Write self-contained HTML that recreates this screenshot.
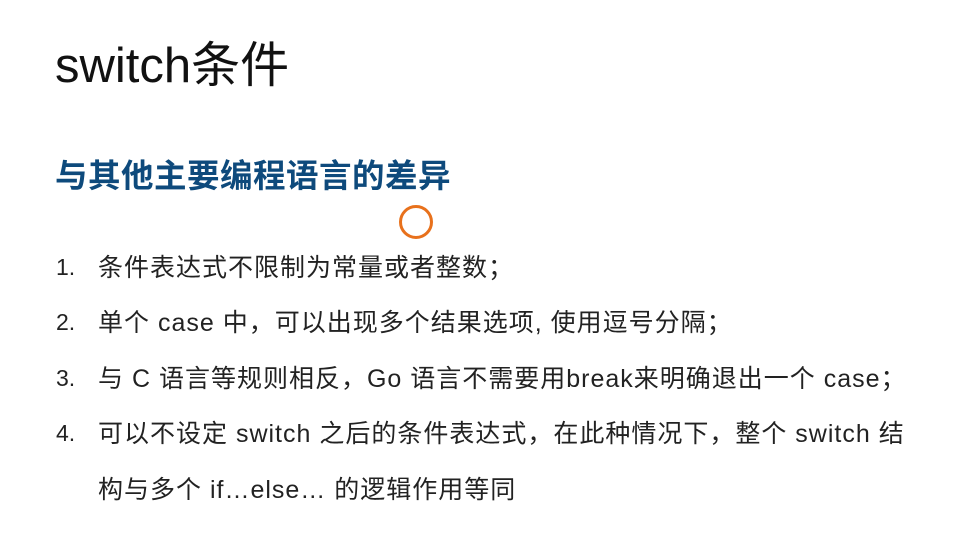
<!DOCTYPE html>
<html><head><meta charset="utf-8"><style>
html,body{margin:0;padding:0;background:#fff;width:953px;height:553px;overflow:hidden;position:relative}
div{position:absolute;white-space:nowrap;font-family:"Liberation Sans","Noto Sans CJK SC",sans-serif}
.t{left:55px;top:26px;font-size:49px;color:#111}
.h{left:55px;top:150px;font-size:32.5px;color:#0e4a7c;font-weight:bold;letter-spacing:0.5px}
.n{left:56px;font-size:23px;color:#222}
.l{left:98px;font-size:25px;color:#222;letter-spacing:1px}
.c{left:399px;top:205px;width:28px;height:28px;border:3px solid #e8711c;border-radius:50%}
</style></head><body>
<div class="t">switch条件</div>
<div class="h">与其他主要编程语言的差异</div>
<div class="c"></div>
<div class="n" style="top:254px">1.</div><div class="l" style="top:248px">条件表达式不限制为常量或者整数；</div>
<div class="n" style="top:309px">2.</div><div class="l" style="top:303px">单个 case 中，可以出现多个结果选项, 使用逗号分隔；</div>
<div class="n" style="top:365px">3.</div><div class="l" style="top:359px">与 C 语言等规则相反，Go 语言不需要用break来明确退出一个 case；</div>
<div class="n" style="top:420px">4.</div><div class="l" style="top:414px">可以不设定 switch 之后的条件表达式，在此种情况下，整个 switch 结</div>
<div class="l" style="top:470px">构与多个 if…else… 的逻辑作用等同</div>
</body></html>
